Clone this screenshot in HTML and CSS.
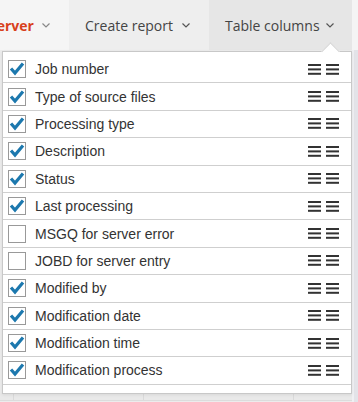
FILE: index.html
```html
<!DOCTYPE html>
<html lang="en">
<head>
  <meta charset="UTF-8">
  <meta name="viewport" content="width=device-width, initial-scale=1.0">
  <title>Jobs - Table columns</title>
  <link rel="stylesheet" href="styles.css">
</head>
<body>
  <header class="toolbar">
    <div class="tab tab-server">
      <span class="tab-label">Server</span>
      <svg class="chev" width="8" height="5" viewBox="0 0 8 5"><path d="M0.5 0.5 L4 4 L7.5 0.5" fill="none" stroke="#888" stroke-width="1.2"/></svg>
    </div>
    <div class="tab tab-report">
      <span class="tab-label">Create report</span>
      <svg class="chev" width="8" height="5" viewBox="0 0 8 5"><path d="M0.5 0.5 L4 4 L7.5 0.5" fill="none" stroke="#555" stroke-width="1.2"/></svg>
    </div>
    <div class="tab tab-columns">
      <span class="tab-label">Table columns</span>
      <svg class="chev" width="8" height="5" viewBox="0 0 8 5"><path d="M0.5 0.5 L4 4 L7.5 0.5" fill="none" stroke="#555" stroke-width="1.2"/></svg>
    </div>
    <div class="tab-rest"></div>
  </header>

  <main class="content">
    <div class="grid">
      <div class="grid-head">
        <div class="cell c1"></div>
        <div class="cell c2"></div>
        <div class="cell c3"></div>
        <div class="cell c4"></div>
      </div>
    </div>
    <div class="scroll-track"></div>

    <div class="columns-menu">
      <ul id="column-list"></ul>
    </div>
  </main>

<script>
const columns = [
  ['Job number', true],
  ['Type of source files', true],
  ['Processing type', true],
  ['Description', true],
  ['Status', true],
  ['Last processing', true],
  ['MSGQ for server error', false],
  ['JOBD for server entry', false],
  ['Modified by', true],
  ['Modification date', true],
  ['Modification time', true],
  ['Modification process', true]
];

const bars = '<svg width="13" height="11" viewBox="0 0 13 11"><rect y="0" width="13" height="2"/><rect y="4.4" width="13" height="2"/><rect y="8.8" width="13" height="2"/></svg>';

const list = document.getElementById('column-list');
columns.forEach(([name, on]) => {
  const rowHTML = `
    <li class="col-row">
      <span class="check ${on ? 'on' : ''}">
        ${on ? '<svg width="16" height="14" viewBox="0 0 16 14"><path d="M2 6.5 L6 11 L14 1.5" fill="none" stroke="#1c78ae" stroke-width="3.2" stroke-linejoin="miter"/></svg>' : ''}
      </span>
      <span class="col-name">${name}</span>
      <span class="handles">${bars}${bars}</span>
    </li>
  `;
  list.insertAdjacentHTML('beforeend', rowHTML);
});
</script>
</body>
</html>
```

FILE: styles.css
```css
* {
  margin: 0;
  padding: 0;
  box-sizing: border-box;
}

body {
  width: 358px;
  height: 402px;
  overflow: hidden;
  background: #fff;
  font-family: 'Open Sans', sans-serif;
}

.toolbar {
  display: flex;
  height: 50px;
  margin-left: -11px;
}

.tab {
  display: flex;
  align-items: center;
  padding-left: 16px;
  font-size: 14px;
  color: #444;
}

.tab .chev {
  margin-left: 9px;
  margin-top: 1px;
}

.tab-server {
  width: 80px;
  background: #f5f5f5;
  padding-left: 0;
}

.tab-server .tab-label {
  color: #d8401c;
  font-weight: bold;
}

.tab-server .chev {
  margin-left: 8px;
}

.tab-report {
  width: 140px;
  background: #eeeeee;
}

.tab-columns {
  width: 143px;
  background: #e6e6e6;
}

.tab-columns .chev {
  margin-left: 6px;
}

.tab-rest {
  flex: 1;
  background: #f4f4f4;
}

.content {
  position: relative;
  height: 352px;
  display: flex;
}

.grid {
  flex: 1;
  display: flex;
  flex-direction: column;
  justify-content: flex-end;
  background: #ececec;
}

.grid-head {
  display: flex;
  height: 8px;
  background: #e9e9e9;
  border-bottom: 1px solid #dcdcdc;
  margin-bottom: 1px;
}

.cell {
  border-right: 1px solid #dadada;
}

.c1 { width: 14px; }
.c2 { width: 130px; }
.c3 { width: 150px; }
.c4 { flex: 1; border-right: none; }

.scroll-track {
  width: 6px;
  background: #e3e3e8;
  border-left: 2px solid #f0f0f3;
}

/* dropdown with the column list */
.columns-menu {
  position: absolute;
  top: 1px;
  left: 2px;
  width: 350px;
  background: #fff;
  border: 1px solid #c8c8c8;
  padding: 4px 0 8px;
  box-shadow: 0 1px 3px rgba(0, 0, 0, 0.08);
}

.columns-menu::before {
  content: '';
  position: absolute;
  top: -7px;
  left: 321px;
  width: 12px;
  height: 12px;
  background: #fff;
  border-top: 1px solid #d4d4d4;
  border-left: 1px solid #d4d4d4;
  transform: rotate(45deg);
}

#column-list {
  list-style: none;
  position: relative;
}

.col-row {
  display: flex;
  align-items: center;
  height: 27.4px;
  padding: 0 12px 0 5px;
  border-bottom: 1px solid #cfcfcf;
  font-family: 'Liberation Sans', Arial, sans-serif;
  font-size: 14px;
  color: #333;
}

.check {
  width: 18px;
  height: 18px;
  border: 1px solid #999;
  display: flex;
  align-items: center;
  justify-content: center;
  background: #fff;
}

.col-name {
  flex: 1;
  margin-left: 9px;
}

.handles {
  display: flex;
  gap: 5px;
  fill: #333;
}
```
